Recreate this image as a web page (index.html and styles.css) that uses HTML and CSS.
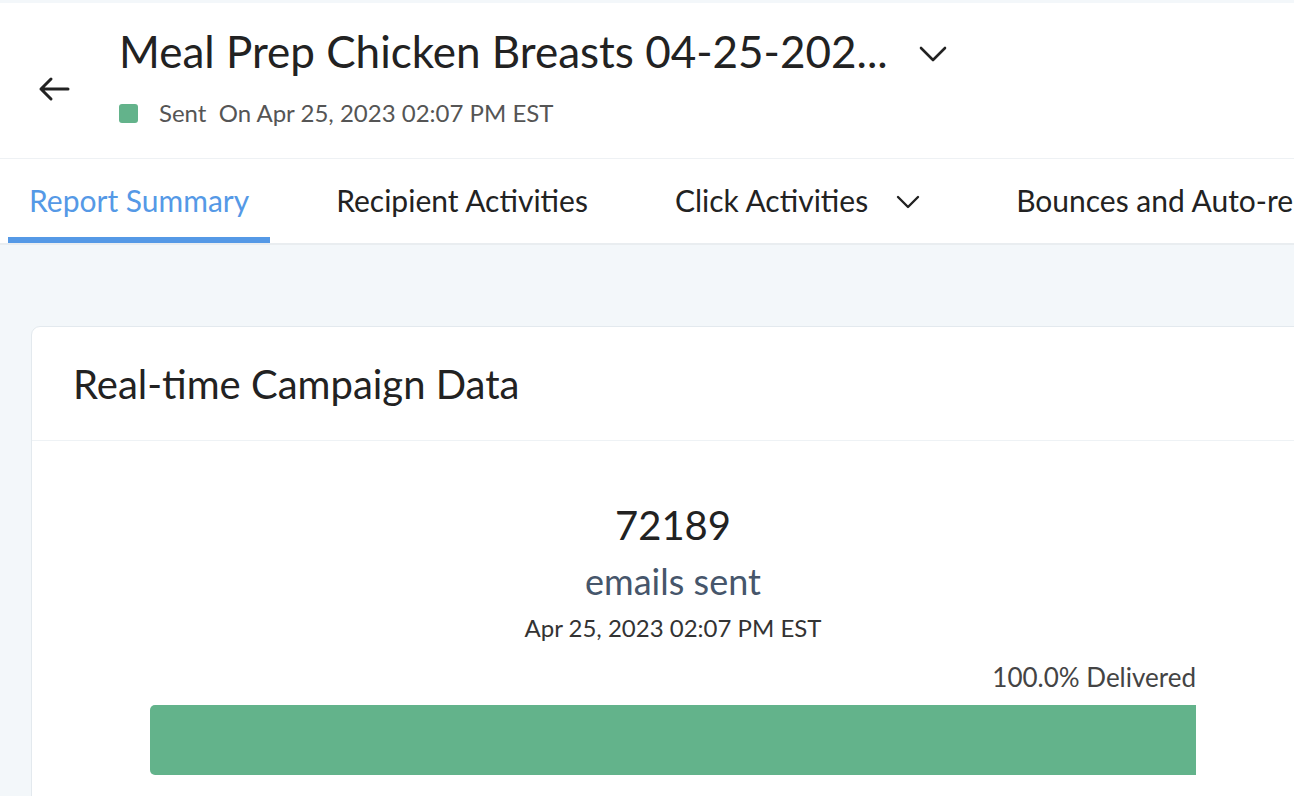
FILE: index.html
```html
<!DOCTYPE html>
<html>
<head>
<meta charset="utf-8">
<link rel="stylesheet" href="styles.css">
</head>
<body>
<div class="page">
  <header class="header">
    <button class="back" aria-label="Back">
      <svg width="34" height="26" viewBox="0 0 34 26"><path d="M31 13H4M14 3L4 13l10 10" fill="none" stroke="#222" stroke-width="3" stroke-linecap="round" stroke-linejoin="round"/></svg>
    </button>
    <div class="title-block">
      <div class="title-row">
        <h1 class="title">Meal Prep Chicken Breasts 04-25-202...</h1>
        <svg class="title-chev" width="30" height="20" viewBox="0 0 30 20"><path d="M3 5l12 12L27 5" fill="none" stroke="#222" stroke-width="2.6" stroke-linecap="round" stroke-linejoin="round"/></svg>
      </div>
      <div class="status">
        <span class="dot"></span>
        <span class="status-text">Sent&nbsp; On Apr 25, 2023 02:07 PM EST</span>
      </div>
    </div>
  </header>
  <nav class="tabs">
    <div class="tab active">Report Summary</div>
    <div class="tab">Recipient Activities</div>
    <div class="tab">Click Activities
      <svg class="tab-chev" width="26" height="16" viewBox="0 0 26 16"><path d="M3 4l10 10L23 4" fill="none" stroke="#222" stroke-width="2.4" stroke-linecap="round" stroke-linejoin="round"/></svg>
    </div>
    <div class="tab">Bounces and Auto-replies</div>
  </nav>
  <main class="main">
    <section class="card">
      <div class="card-head">Real-time Campaign Data</div>
      <div class="card-body">
        <div class="count">72189</div>
        <div class="count-label">emails sent</div>
        <div class="count-date">Apr 25, 2023 02:07 PM EST</div>
        <div class="delivered">100.0% Delivered</div>
        <div class="bar"><div class="bar-fill" style="width:100%"></div></div>
      </div>
    </section>
  </main>
</div>
</body>
</html>
```
FILE: styles.css
```css
* { box-sizing: border-box; }
html, body { margin: 0; padding: 0; }
body {
  background: #f3f7fa;
  font-family: Lato, "Open Sans", "Liberation Sans", sans-serif;
  color: #222;
  overflow: hidden;
  width: 1294px;
  height: 796px;
}
.page { padding-top: 3px; }
.header {
  background: #fff;
  height: 156px;
  border-bottom: 1px solid #eef1f4;
  display: flex;
  align-items: flex-start;
}
.back {
  border: 0;
  background: none;
  padding: 0;
  margin: 73px 0 0 37px;
  width: 34px;
  height: 26px;
  display: flex;
}
.title-block {
  margin-left: 48px;
  padding-top: 20px;
}
.title-row { display: flex; align-items: center; }
.title {
  margin: 0;
  font-weight: 400;
  font-size: 44px;
  line-height: 56px;
  color: #222;
  white-space: nowrap;
}
.title-chev { margin-left: 30px; margin-top: 3px; }
.status {
  display: flex;
  align-items: center;
  margin-top: 21px;
}
.dot {
  width: 19px;
  height: 19px;
  border-radius: 3px;
  background: #63b38b;
  margin-right: 21px;
}
.status-text {
  font-size: 24px;
  line-height: 26px;
  color: #555;
}
.tabs {
  background: #fff;
  height: 86px;
  border-bottom: 2px solid #e9edf0;
  display: flex;
  padding-left: 8px;
  white-space: nowrap;
  overflow: hidden;
}
.tab {
  font-size: 30px;
  color: #222;
  padding: 0 21px;
  margin-right: 45px;
  display: flex;
  align-items: center;
  height: 84px;
  border-bottom: 6px solid transparent;
  padding-top: 4px;
  flex-shrink: 0;
}
.tab.active {
  color: #5599e6;
  border-bottom-color: #5599e6;
}
.tab-chev { margin-left: 27px; margin-right: 8px; margin-top: 2px; }
.main {
  padding: 81px 0 0 31px;
}
.card {
  width: 1284px;
  background: #fff;
  border: 1.5px solid #e3e9ee;
  border-radius: 9px;
}
.card-head {
  height: 114px;
  display: flex;
  align-items: center;
  padding-left: 41px;
  font-size: 40px;
  color: #222;
  border-bottom: 1.5px solid #eef2f5;
}
.card-body {
  padding: 60px 118px 40px;
  display: flex;
  flex-direction: column;
  align-items: center;
}
.count {
  font-size: 40px;
  line-height: 48px;
  color: #222;
}
.count-label {
  font-size: 36px;
  line-height: 40px;
  color: #46566b;
  margin-top: 12px;
}
.count-date {
  font-size: 24px;
  line-height: 30px;
  color: #333;
  margin-top: 12px;
}
.delivered {
  align-self: flex-end;
  font-size: 26px;
  line-height: 30px;
  color: #444;
  margin-top: 19px;
}
.bar {
  align-self: stretch;
  height: 70px;
  margin-top: 13px;
  border-radius: 5px 0 0 5px;
  overflow: hidden;
}
.bar-fill {
  height: 100%;
  background: #63b38b;
}
```
